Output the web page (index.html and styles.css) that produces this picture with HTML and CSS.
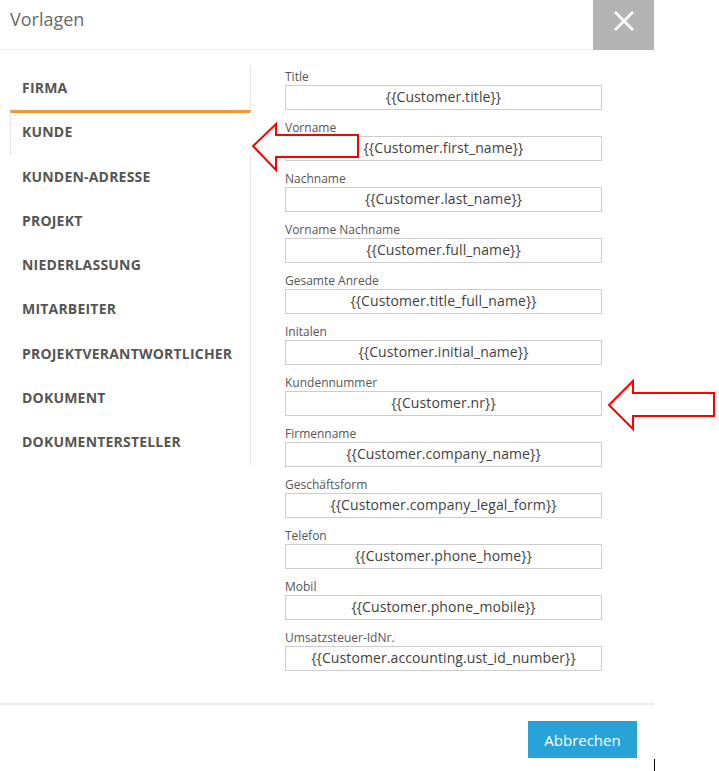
FILE: index.html
```html
<!DOCTYPE html>
<html lang="de">
<head>
    <meta charset="UTF-8">
    <title>Vorlagen</title>
    <link rel="stylesheet" href="styles.css">
</head>
<body>
    <div class="dialog">
        <header class="dialog-kopf">
            <h1>Vorlagen</h1>
            <button class="schliessen" type="button" aria-label="Schließen">
                <svg width="20" height="20" viewBox="0 0 20 20">
                    <path d="M1 1 L19 19 M19 1 L1 19" stroke="#fff" stroke-width="2.6" fill="none"/>
                </svg>
            </button>
        </header>

        <div class="dialog-inhalt">
            <ul class="reiter">
                <li>FIRMA</li>
                <li class="aktiv">KUNDE</li>
                <li>KUNDEN-ADRESSE</li>
                <li>PROJEKT</li>
                <li>NIEDERLASSUNG</li>
                <li>MITARBEITER</li>
                <li>PROJEKTVERANTWORTLICHER</li>
                <li>DOKUMENT</li>
                <li>DOKUMENTERSTELLER</li>
            </ul>

            <div class="felder">
                <div class="feld"><label>Title</label><div class="wert">{{Customer.title}}</div></div>
                <div class="feld"><label>Vorname</label><div class="wert">{{Customer.first_name}}</div></div>
                <div class="feld"><label>Nachname</label><div class="wert">{{Customer.last_name}}</div></div>
                <div class="feld"><label>Vorname Nachname</label><div class="wert">{{Customer.full_name}}</div></div>
                <div class="feld"><label>Gesamte Anrede</label><div class="wert">{{Customer.title_full_name}}</div></div>
                <div class="feld"><label>Initalen</label><div class="wert">{{Customer.initial_name}}</div></div>
                <div class="feld"><label>Kundennummer</label><div class="wert">{{Customer.nr}}</div></div>
                <div class="feld"><label>Firmenname</label><div class="wert">{{Customer.company_name}}</div></div>
                <div class="feld"><label>Geschäftsform</label><div class="wert">{{Customer.company_legal_form}}</div></div>
                <div class="feld"><label>Telefon</label><div class="wert">{{Customer.phone_home}}</div></div>
                <div class="feld"><label>Mobil</label><div class="wert">{{Customer.phone_mobile}}</div></div>
                <div class="feld"><label>Umsatzsteuer-IdNr.</label><div class="wert">{{Customer.accounting.ust_id_number}}</div></div>
            </div>
        </div>

        <footer class="dialog-fuss">
            <button class="abbrechen" type="button">Abbrechen</button>
        </footer>
    </div>

    <!-- Markierungen (Pfeile) -->
    <svg class="markierung" width="719" height="771" viewBox="0 0 719 771">
        <polygon points="253,146 276,124 276,135 358,135 358,157 276,157 276,170" fill="#fff" stroke="#f00" stroke-width="2"/>
        <polygon points="609,405 633,381 633,393 714,393 714,416 633,416 633,429" fill="#fff" stroke="#f00" stroke-width="2"/>
    </svg>
    <div class="cursor"></div>
</body>
</html>
```

FILE: styles.css
```css
/* Dialog Vorlagen */
body {
    margin: 0;
    background-color: #ffffff;
    font-family: "Open Sans", Arial, sans-serif;
    color: #555555;
}

.dialog {
    width: 654px;
    background-color: #ffffff;
}

.dialog-kopf {
    display: flex;
    align-items: stretch;
    height: 49px;
    border-bottom: 1px solid #ececec;
}

.dialog-kopf h1 {
    flex: 1;
    margin: 0;
    padding: 7px 0 0 10px;
    font-size: 18px;
    font-weight: normal;
    color: #6a6a6a;
}

.schliessen {
    width: 61px;
    height: 50px;
    margin-bottom: -1px;
    border: none;
    padding: 0 0 9px 0;
    background-color: #b3b3b3;
    display: flex;
    align-items: center;
    justify-content: center;
}

.dialog-inhalt {
    display: flex;
    padding: 16px 0 23px 10px;
}

.reiter {
    list-style: none;
    margin: 0;
    padding: 0;
    width: 241px;
    align-self: flex-start;
}

.reiter li {
    height: 44.3px;
    line-height: 44px;
    padding-left: 12px;
    font-size: 14px;
    font-weight: bold;
    letter-spacing: 0.2px;
    color: #555555;
    border-right: 1px solid #e3e3e3;
    box-sizing: border-box;
}

.reiter li.aktiv {
    border-top: 3px solid #f39639;
    border-left: 1px solid #e3e3e3;
    border-right: 1px solid transparent;
    padding-left: 11px;
    line-height: 38px;
}

.felder {
    margin-left: 34px;
    width: 317px;
    padding-top: 2px;
}

.feld {
    margin-bottom: 9px;
}

.feld label {
    display: block;
    height: 17px;
    font-size: 12px;
    line-height: 17px;
    color: #555555;
}

.wert {
    height: 25px;
    box-sizing: border-box;
    border: 1px solid #cccccc;
    text-align: center;
    font-size: 14px;
    letter-spacing: 0.1px;
    line-height: 22px;
    color: #3f3f3f;
    white-space: nowrap;
}

.dialog-fuss {
    display: flex;
    justify-content: flex-end;
    border-top: 2px solid #ebebeb;
    padding: 16px 17px 0 0;
}

.abbrechen {
    width: 109px;
    height: 37px;
    border: none;
    background-color: #27a3d8;
    color: #ffffff;
    font-family: "Open Sans", Arial, sans-serif;
    font-size: 15px;
}

.markierung {
    position: absolute;
    left: 0;
    top: 0;
    pointer-events: none;
}

.cursor {
    position: absolute;
    left: 654px;
    top: 759px;
    width: 1px;
    height: 12px;
    background-color: #000000;
}
```
